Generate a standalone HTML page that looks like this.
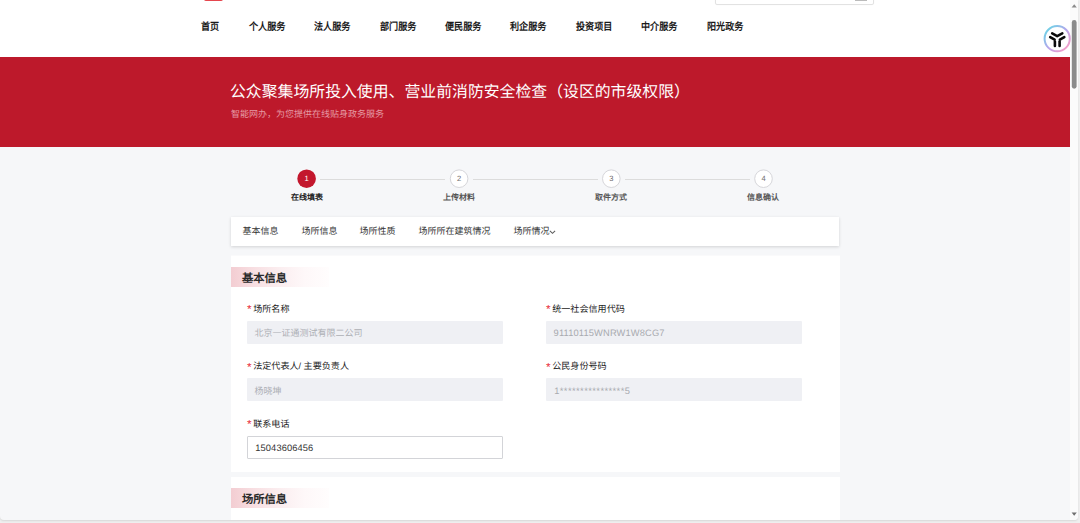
<!DOCTYPE html>
<html lang="zh-CN">
<head>
<meta charset="utf-8">
<title>公众聚集场所投入使用、营业前消防安全检查</title>
<style>
*{box-sizing:border-box;margin:0;padding:0}
html,body{text-rendering:geometricPrecision;width:1080px;height:523px;overflow:hidden;background:#efefef;font-family:"Liberation Sans",sans-serif;}
#win{position:absolute;left:0;top:0;width:1078px;height:520px;background:#f6f7f9;border-radius:0 0 4px 4px;overflow:hidden;box-shadow:0 1px 2px rgba(0,0,0,.10);}
.abs{position:absolute}
#nav{position:absolute;left:0;top:0;width:1070px;height:57px;background:#fff}
.nv{position:absolute;top:20px;margin-left:.5px;font-size:10.2px;font-weight:bold;color:#1a1a1a;line-height:14px;white-space:nowrap;transform:translateY(.5px) scaleX(.89);transform-origin:0 50%}
#banner{position:absolute;left:0;top:57px;width:1070px;height:90px;background:#bd192b}
#title{position:absolute;left:230px;top:24.2px;font-size:15.87px;color:#fff;line-height:24px;white-space:nowrap}
#sub{position:absolute;left:231px;top:50.5px;font-size:9px;color:#e59aa3;line-height:12px;white-space:nowrap}
.circ{position:absolute;top:169.3px;width:18.6px;height:18.6px;border-radius:50%;border:1px solid #d6d6da;background:#fff;color:#707070;font-size:7.6px;line-height:16.7px;text-align:center}
.circ.on{background:#c3172d;border-color:#c3172d;color:#fff}
.sline{position:absolute;top:179px;height:1px;background:#dcdcdc}
.slab{position:absolute;top:191.8px;width:80px;text-align:center;font-size:8px;font-weight:bold;color:#555;line-height:12px}
.slab.on{color:#222}
#tabs{position:absolute;left:231px;top:217px;width:608.4px;height:29px;background:#fff;box-shadow:0 1px 3px rgba(0,0,0,.15)}
.tb{position:absolute;top:8.2px;margin-left:.4px;font-size:9px;color:#333;line-height:12px;white-space:nowrap}
.card{position:absolute;left:231px;width:609px;background:#fff}
.sh{position:absolute;left:0;width:98px;height:20px;background:linear-gradient(90deg,#f3cdd2 0%,#f8e0e3 25%,#fbeef0 50%,#fef8f9 75%,#fffdfd 100%)}
.sh span{position:absolute;left:10.9px;top:4px;transform:translateY(.5px);font-size:11.3px;font-weight:bold;color:#2a2a2a;line-height:14px;white-space:nowrap}
.lab{position:absolute;margin:0 0 0 .7px;font-size:9.08px;color:#222;line-height:12px;white-space:nowrap}
.lab i{font-style:normal;color:#e8303a;display:inline-block;width:5.5px;font-size:11.8px;line-height:12px;height:12px;vertical-align:-1.5px;text-indent:-.6px;overflow:visible}
.inp{position:absolute;width:256px;height:23px;background:#eff0f4;border-radius:1px;font-size:9px;color:#adafb4;line-height:24.6px;padding-left:7.6px;white-space:nowrap}
.inp.ed{background:#fff;border:1px solid #d3d4d8;color:#333;line-height:22.6px;padding-left:6.6px}
.inp.lt{font-size:9.3px;letter-spacing:.15px;color:#a8aaaf}
.inp.ed.lt{color:#333}
.dg{position:absolute;top:170px;width:20px;height:17px;line-height:17px;text-align:center;font-size:7.6px;color:#707070}
</style>
</head>
<body>
<div id="win">
  <div id="nav">
    <div class="abs" style="left:204px;top:-1px;width:19px;height:2px;background:#e0262f;border-radius:0 0 2px 2px;opacity:.85"></div>
    <div class="abs" style="left:715px;top:-5.5px;width:159px;height:10px;border:1px solid #e2e2e2;border-radius:2px;box-shadow:0 0 1px rgba(0,0,0,.08)"></div>
    <div class="abs" style="left:855px;top:0;width:12px;height:1px;background:#aaa;opacity:.8"></div>
    <div class="nv" style="left:200.2px">首页</div>
    <div class="nv" style="left:248px">个人服务</div>
    <div class="nv" style="left:313px">法人服务</div>
    <div class="nv" style="left:379px">部门服务</div>
    <div class="nv" style="left:444px">便民服务</div>
    <div class="nv" style="left:509px">利企服务</div>
    <div class="nv" style="left:575px">投资项目</div>
    <div class="nv" style="left:640px">中介服务</div>
    <div class="nv" style="left:706px">阳光政务</div>
  </div>
  <div id="banner">
    <div id="title">公众聚集场所投入使用、营业前消防安全检查（设区的市级权限）</div>
    <div id="sub">智能网办，为您提供在线贴身政务服务</div>
  </div>

  <div class="sline" style="left:320px;width:125px"></div>
  <div class="sline" style="left:473px;width:125px"></div>
  <div class="sline" style="left:625px;width:125px"></div>
  <svg class="abs" style="left:290px;top:165px" width="490" height="28" viewBox="290 165 490 28">
    <circle cx="306.6" cy="178.7" r="9.3" fill="#c3172d"/>
    <circle cx="459.1" cy="178.7" r="8.8" fill="#fff" stroke="#d6d6da" stroke-width="1"/>
    <circle cx="611.3" cy="178.7" r="8.8" fill="#fff" stroke="#d6d6da" stroke-width="1"/>
    <circle cx="763.5" cy="178.7" r="8.8" fill="#fff" stroke="#d6d6da" stroke-width="1"/>
  </svg>
  <div class="dg" style="left:296.6px;color:#fff">1</div>
  <div class="dg" style="left:449.1px">2</div>
  <div class="dg" style="left:601.3px">3</div>
  <div class="dg" style="left:753.5px">4</div>
  <div class="slab on" style="left:267px">在线填表</div>
  <div class="slab" style="left:419px">上传材料</div>
  <div class="slab" style="left:571px">取件方式</div>
  <div class="slab" style="left:723px">信息确认</div>

  <div id="tabs">
    <div class="tb" style="left:11px">基本信息</div>
    <div class="tb" style="left:70px">场所信息</div>
    <div class="tb" style="left:128px">场所性质</div>
    <div class="tb" style="left:187px">场所所在建筑情况</div>
    <div class="tb" style="left:282px">场所情况</div>
    <svg class="abs" style="left:318.4px;top:12.9px" width="7" height="5" viewBox="0 0 7 5"><path d="M0.9 0.9 L3.5 3.3 L6.1 0.9" stroke="#5e5e5e" stroke-width="1.1" fill="none"/></svg>
  </div>

  <div class="card" style="top:255px;height:217px">
    <div class="abs" style="left:0;top:0;width:609px;height:1px;background:rgba(246,247,249,.6)"></div>
    <div class="sh" style="top:12px"><span>基本信息</span></div>
    <div class="lab" style="left:16px;top:47.9px"><i>*</i>场所名称</div>
    <div class="inp" style="left:16px;top:66px">北京一证通测试有限二公司</div>
    <div class="lab" style="left:315px;top:47.9px"><i>*</i>统一社会信用代码</div>
    <div class="inp lt" style="left:315px;top:66px">91110115WNRW1W8CG7</div>
    <div class="lab" style="left:16px;top:105.3px"><i>*</i>法定代表人/ 主要负责人</div>
    <div class="inp" style="left:16px;top:123px;line-height:26.8px">杨晓坤</div>
    <div class="lab" style="left:315px;top:105.3px"><i>*</i>公民身份号码</div>
    <div class="inp lt" style="left:315px;top:123px;line-height:26.8px;padding-left:8.2px;letter-spacing:.44px">1****************5</div>
    <div class="lab" style="left:16px;top:162.95px"><i>*</i>联系电话</div>
    <div class="inp ed lt" style="left:16px;top:181px;letter-spacing:.1px;padding-left:7.3px;line-height:23.5px">15043606456</div>
  </div>
  <div class="card" style="top:477px;height:50px">
    <div class="sh" style="top:11px"><span>场所信息</span></div>
  </div>

  <!-- floating icon -->
  <svg class="abs" style="left:1043px;top:24px;z-index:5" width="29" height="30" viewBox="1043 24 29 30">
    <defs><linearGradient id="rg" x1="0.1" y1="0.1" x2="0.9" y2="0.9"><stop offset="0" stop-color="#6fd2e6"/><stop offset="0.5" stop-color="#b5a6ec"/><stop offset="1" stop-color="#f79fc9"/></linearGradient></defs>
    <circle cx="1057.2" cy="38.7" r="12.6" fill="#fff" stroke="url(#rg)" stroke-width="2"/>
    <g stroke="#0b0b0b" stroke-width="2.6" stroke-linecap="round" stroke-linejoin="round" fill="none">
      <path d="M1052.2 33.4 L1057.2 36.1 L1062.3 33.4"/>
      <path d="M1050.2 37.1 L1054.6 39.6"/>
      <path d="M1054.9 41.6 L1054.9 45.9"/>
      <path d="M1064.3 37.1 L1059.9 39.6"/>
      <path d="M1059.6 41.6 L1059.6 45.9"/>
    </g>
  </svg>

  <!-- scrollbar -->
  <div class="abs" style="left:1070px;top:0;width:9px;height:520px;background:#fbfbfb"></div>
  <svg class="abs" style="left:1070px;top:0" width="9" height="520" viewBox="1070 0 9 520">
    <rect x="1071.8" y="20" width="4.8" height="68.7" rx="2.4" fill="#8b8b8b"/>
    <path d="M1071.6 7.6 L1074.2 4.2 L1076.8 7.6 Z" fill="#8b8b8b"/>
    <path d="M1071.6 512.4 L1074.2 515.8 L1076.8 512.4 Z" fill="#6f6f6f"/>
  </svg>
</div>
</body>
</html>
